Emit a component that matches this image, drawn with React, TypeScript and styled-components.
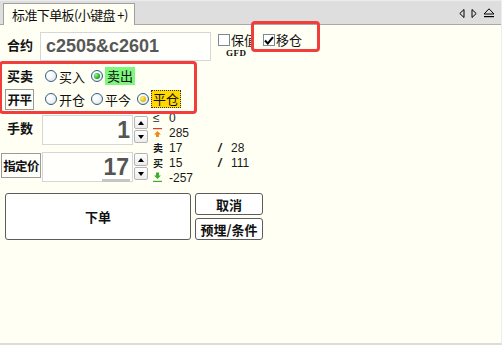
import React from "react"
import styled, { createGlobalStyle, css } from "styled-components"

const BG = "#fffff4"
const CJK = `"Noto Sans CJK SC", "DejaVu Sans", sans-serif`
const LATIN = `"Liberation Sans", Arial, sans-serif`
const MARK = "#f23d3d"

const GlobalStyle = createGlobalStyle`
  html, body {
    margin: 0;
    padding: 0;
    background: ${BG};
  }
  body {
    font-family: ${CJK};
    font-size: 13px;
    color: #111;
  }
`

const Window = styled.div`
  width: 502px;
  height: 345px;
  box-sizing: border-box;
  display: flex;
  flex-direction: column;
  background: ${BG};
  border-bottom: 2px solid #dcdcdc;
  border-right: 1px solid #ececec;
  overflow: hidden;
`

const TabBar = styled.div`
  height: 25px;
  flex: none;
  box-sizing: border-box;
  display: flex;
  align-items: flex-end;
  justify-content: space-between;
  background: #dedede;
  border-top: 1px solid #ececec;
  border-bottom: 1px solid #a8a8a8;
`

const Tab = styled.div`
  height: 22px;
  margin: 0 0 -1px 3px;
  padding: 0 6px 0 8px;
  box-sizing: border-box;
  display: flex;
  align-items: center;
  background: ${BG};
  border: 1px solid #a0a0a0;
  border-bottom: none;
  font-size: 13px;
  letter-spacing: -0.6px;
  color: #111;
`

const TabTools = styled.div`
  display: flex;
  align-items: center;
  gap: 6px;
  height: 22px;
  margin-right: 6px;
`

const Body = styled.div`
  flex: 1;
  display: flex;
  flex-direction: column;
`

const ContractRow = styled.div`
  display: flex;
  align-items: flex-start;
  margin-top: 6px;
  height: 30px;
  padding-left: 7px;
`

const Label = styled.div<{ $w?: number; $ml?: number; $lh?: number }>`
  font-weight: 700;
  font-size: 13px;
  width: ${({ $w }) => $w ?? 33}px;
  margin-left: ${({ $ml }) => $ml ?? 0}px;
  flex: none;
  line-height: ${({ $lh }) => $lh ?? 22}px;
  white-space: nowrap;
`

const BoxLabel = styled.div<{ $w: number; $h: number }>`
  width: ${({ $w }) => $w}px;
  height: ${({ $h }) => $h}px;
  box-sizing: border-box;
  flex: none;
  display: flex;
  align-items: center;
  justify-content: center;
  border: 1px solid #9a9a9a;
  background: #fffffa;
  font-weight: 700;
  font-size: 12.5px;
  letter-spacing: -0.6px;
  white-space: nowrap;
`

const ContractInput = styled.div`
  width: 171px;
  height: 29px;
  box-sizing: border-box;
  margin-top: 1px;
  border: 1px solid #d6d6d6;
  background: #fffffb;
  padding-left: 5px;
  display: flex;
  align-items: center;
  font-family: ${LATIN};
  font-weight: 700;
  font-size: 18px;
  color: #585858;
`

const Hedge = styled.div`
  width: 36px;
  margin-left: 7px;
  margin-top: 2px;
  overflow: hidden;
  display: flex;
  flex-direction: column;
`

const CheckLine = styled.label`
  display: flex;
  align-items: center;
  gap: 1px;
  white-space: nowrap;
  font-size: 13px;
  line-height: 14px;
`

const Gfd = styled.div`
  margin: 1px 0 0 8px;
  font-family: "Liberation Serif", serif;
  font-weight: 700;
  font-size: 9px;
  letter-spacing: 0.5px;
`

const Marked = styled.div<{ $inset: string }>`
  position: relative;
  &::after {
    content: "";
    position: absolute;
    inset: ${({ $inset }) => $inset};
    border: 3px solid ${MARK};
    border-radius: 4px;
    pointer-events: none;
  }
`

const MoveBox = styled(Marked)`
  margin-left: 9px;
  margin-top: 2px;
`

const Box = styled.span`
  width: 12px;
  height: 12px;
  box-sizing: border-box;
  flex: none;
  display: inline-flex;
  align-items: center;
  justify-content: center;
  border: 1px solid #7b8a98;
  background: #fff;
`

const SideGroup = styled(Marked)`
  margin-top: 4px;
  display: flex;
  flex-direction: column;
  gap: 1px;
  width: 192px;
`

const OptionRow = styled.div`
  display: flex;
  align-items: center;
  height: 22px;
`

const Options = styled.div<{ $ml: number }>`
  display: flex;
  align-items: center;
  gap: 6px;
  margin-left: ${({ $ml }) => $ml}px;
`

const Option = styled.label`
  display: flex;
  align-items: center;
  gap: 2px;
  font-size: 13px;
  white-space: nowrap;
`

const Dot = styled.span<{ $color?: "green" | "yellow" }>`
  width: 12px;
  height: 12px;
  box-sizing: border-box;
  border-radius: 50%;
  flex: none;
  border: 1px solid #2f5e88;
  background: radial-gradient(circle at 35% 35%, #ffffff 20%, #d8dde2 100%);
  display: inline-flex;
  align-items: center;
  justify-content: center;
  &::after {
    content: "";
    width: 6px;
    height: 6px;
    border-radius: 50%;
    display: ${({ $color }) => ($color ? "block" : "none")};
    background: ${({ $color }) =>
      $color === "yellow"
        ? "radial-gradient(circle at 35% 35%, #fff38a, #e0b800 70%)"
        : "radial-gradient(circle at 35% 35%, #8dfb8d, #15a015 70%)"};
  }
`

const Hilite = styled.span<{ $tone: "green" | "yellow" }>`
  padding: 1px 2px;
  line-height: 16px;
  ${({ $tone }) =>
    $tone === "green"
      ? css`
          background: #7ef77e;
        `
      : css`
          background: #ffd800;
          outline: 1px dotted #333;
          outline-offset: -1px;
        `}
`

const Lower = styled.div`
  display: flex;
`

const Entries = styled.div`
  width: 153px;
  flex: none;
  padding-top: 5px;
  display: flex;
  flex-direction: column;
  gap: 6px;
`

const EntryRow = styled.div`
  display: flex;
  align-items: flex-start;
  height: 31px;
`

const NumberInput = styled.div`
  width: 91px;
  height: 30px;
  box-sizing: border-box;
  border: 1px solid #d6d6d6;
  background: #fffffb;
  display: flex;
  align-items: center;
  justify-content: flex-end;
  padding-right: 2px;
  font-family: ${LATIN};
  font-weight: 700;
  font-size: 23px;
  color: #555;
`

const Value = styled.span<{ $marked?: boolean }>`
  line-height: 24px;
  ${({ $marked }) =>
    $marked &&
    css`
      border-bottom: 3px solid #c6c6c6;
      padding: 0 1px;
      margin-top: 3px;
    `}
`

const Spinner = styled.div`
  display: flex;
  flex-direction: column;
  gap: 1px;
  margin: 1px 0 0 1px;
`

const SpinButton = styled.div`
  width: 14px;
  height: 13px;
  box-sizing: border-box;
  border: 1px solid #b4b4b4;
  border-radius: 2px;
  background: linear-gradient(#ffffff, #ececec);
  display: flex;
  align-items: center;
  justify-content: center;
`

const Info = styled.div`
  display: grid;
  grid-template-columns: 16px 49px 13px auto;
  grid-auto-rows: 15px;
  align-items: center;
  align-content: start;
  font-family: ${LATIN};
  font-size: 12px;
  color: #1a1a1a;
`

const InfoIcon = styled.span<{ $plain?: boolean }>`
  display: flex;
  align-items: center;
  font-family: ${({ $plain }) => ($plain ? LATIN : CJK)};
  font-weight: ${({ $plain }) => ($plain ? 400 : 700)};
  font-size: ${({ $plain }) => ($plain ? 12 : 10)}px;
`

const Slash = styled.span`
  font-weight: 700;
  font-style: italic;
  font-size: 12px;
`

const Actions = styled.div`
  display: flex;
  gap: 4px;
  margin: 8px 0 0 5px;
`

const Button = styled.button<{ $w: number; $h: number }>`
  width: ${({ $w }) => $w}px;
  height: ${({ $h }) => $h}px;
  box-sizing: border-box;
  padding: 0;
  border: 1px solid #5c5c5c;
  border-radius: 3px;
  background: #ffffff;
  font-family: ${CJK};
  font-weight: 700;
  font-size: 13px;
  color: #111;
`

const ButtonStack = styled.div`
  display: flex;
  flex-direction: column;
  gap: 3px;
`

const Check = () => (
  <svg width="10" height="9" viewBox="0 0 10 9">
    <path d="M1 4.5 L3.8 7.5 L9 1.2" fill="none" stroke="#000" strokeWidth="2" />
  </svg>
)

const Tri = ({ dir }: { dir: "up" | "down" }) => (
  <svg width="6" height="4" viewBox="0 0 6 4">
    <path d={dir === "up" ? "M0 4 L3 0 L6 4 Z" : "M0 0 L3 4 L6 0 Z"} fill="#000" />
  </svg>
)

const UpIcon = () => (
  <svg width="9" height="11" viewBox="0 0 9 11">
    <rect x="0" y="1" width="9" height="1.2" fill="#e23b1a" />
    <path d="M4.5 4 L8 7.5 L6 7.5 L6 10 L3 10 L3 7.5 L1 7.5 Z" fill="#f08a1c" />
  </svg>
)

const DownIcon = () => (
  <svg width="9" height="11" viewBox="0 0 9 11">
    <path d="M3 0.5 L6 0.5 L6 3.5 L8 3.5 L4.5 7 L1 3.5 L3 3.5 Z" fill="#3fae2a" />
    <rect x="0" y="8.8" width="9" height="1.2" fill="#3fae2a" />
  </svg>
)

const TabArrows = () => (
  <TabTools>
    <svg width="6" height="9" viewBox="0 0 6 9">
      <path d="M5 0.5 L0.8 4.5 L5 8.5 Z" fill="none" stroke="#000" />
    </svg>
    <svg width="6" height="9" viewBox="0 0 6 9">
      <path d="M1 0.5 L5.2 4.5 L1 8.5 Z" fill="none" stroke="#000" />
    </svg>
    <svg width="12" height="10" viewBox="0 0 12 10">
      <path d="M6 0.8 L11 6 L1 6 Z" fill="none" stroke="#000" />
      <rect x="1" y="8" width="10" height="1.2" fill="#000" />
    </svg>
  </TabTools>
)

const NumberEntry = ({ value, marked }: { value: string; marked?: boolean }) => (
  <>
    <NumberInput>
      <Value $marked={marked}>{value}</Value>
    </NumberInput>
    <Spinner>
      <SpinButton>
        <Tri dir="up" />
      </SpinButton>
      <SpinButton>
        <Tri dir="down" />
      </SpinButton>
    </Spinner>
  </>
)

const App: React.FunctionComponent = () => (
  <Window>
    <GlobalStyle />
    <TabBar>
      <Tab>标准下单板(小键盘 +)</Tab>
      <TabArrows />
    </TabBar>

    <Body>
      <ContractRow>
        <Label $lh={28}>合约</Label>
        <ContractInput>c2505&amp;c2601</ContractInput>
        <Hedge>
          <CheckLine>
            <Box />
            保值
          </CheckLine>
          <Gfd>GFD</Gfd>
        </Hedge>
        <MoveBox $inset="-12px -18px -5px -12px">
          <CheckLine>
            <Box>
              <Check />
            </Box>
            移仓
          </CheckLine>
        </MoveBox>
      </ContractRow>

      <SideGroup $inset="-4px -5px -4px -1px">
        <OptionRow>
          <Label $ml={7} $w={31}>买卖</Label>
          <Options $ml={7}>
            <Option>
              <Dot />
              买入
            </Option>
            <Option>
              <Dot $color="green" />
              <Hilite $tone="green">卖出</Hilite>
            </Option>
          </Options>
        </OptionRow>
        <OptionRow>
          <BoxLabel $w={29} $h={21} style={{ marginLeft: 5 }}>
            开平
          </BoxLabel>
          <Options $ml={11}>
            <Option>
              <Dot />
              开仓
            </Option>
            <Option>
              <Dot />
              平今
            </Option>
            <Option>
              <Dot $color="yellow" />
              <Hilite $tone="yellow">平仓</Hilite>
            </Option>
          </Options>
        </OptionRow>
      </SideGroup>

      <Lower>
        <Entries>
          <EntryRow>
            <Label $ml={7} $w={35} $lh={26}>手数</Label>
            <NumberEntry value="1" />
          </EntryRow>
          <EntryRow>
            <BoxLabel $w={40} $h={25} style={{ marginLeft: 1, marginTop: 1, marginRight: 1 }}>
              指定价
            </BoxLabel>
            <NumberEntry value="17" marked />
          </EntryRow>
        </Entries>

        <Info>
          <InfoIcon $plain>≤</InfoIcon>
          <span>0</span>
          <span />
          <span />
          <InfoIcon>
            <UpIcon />
          </InfoIcon>
          <span>285</span>
          <span />
          <span />
          <InfoIcon>卖</InfoIcon>
          <span>17</span>
          <Slash>/</Slash>
          <span>28</span>
          <InfoIcon>买</InfoIcon>
          <span>15</span>
          <Slash>/</Slash>
          <span>111</span>
          <InfoIcon>
            <DownIcon />
          </InfoIcon>
          <span>-257</span>
          <span />
          <span />
        </Info>
      </Lower>

      <Actions>
        <Button $w={186} $h={47}>下单</Button>
        <ButtonStack>
          <Button $w={68} $h={22}>取消</Button>
          <Button $w={68} $h={22}>预埋/条件</Button>
        </ButtonStack>
      </Actions>
    </Body>
  </Window>
)

export default App
